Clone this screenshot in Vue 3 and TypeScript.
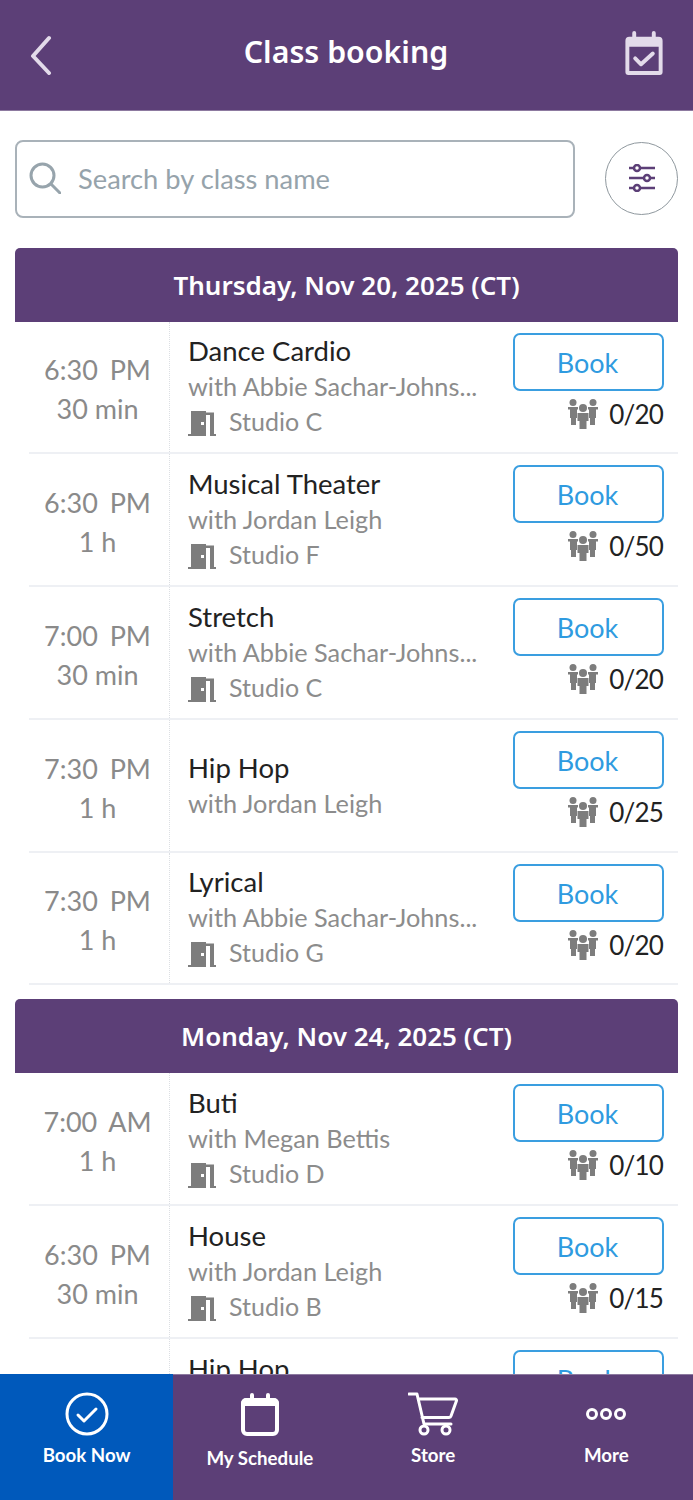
<script setup lang="ts">
interface Session {
  time: string
  duration: string
  name: string
  teacher: string
  studio?: string
  capacity: string
}
interface Day {
  date: string
  sessions: Session[]
}
const abbie = 'with Abbie Sachar-Johns...'
const jordan = 'with Jordan Leigh'
const days: Day[] = [
  {
    date: 'Thursday, Nov 20, 2025 (CT)',
    sessions: [
      { time: '6:30  PM', duration: '30 min', name: 'Dance Cardio', teacher: abbie, studio: 'Studio C', capacity: '0/20' },
      { time: '6:30  PM', duration: '1 h', name: 'Musical Theater', teacher: jordan, studio: 'Studio F', capacity: '0/50' },
      { time: '7:00  PM', duration: '30 min', name: 'Stretch', teacher: abbie, studio: 'Studio C', capacity: '0/20' },
      { time: '7:30  PM', duration: '1 h', name: 'Hip Hop', teacher: jordan, capacity: '0/25' },
      { time: '7:30  PM', duration: '1 h', name: 'Lyrical', teacher: abbie, studio: 'Studio G', capacity: '0/20' },
    ],
  },
  {
    date: 'Monday, Nov 24, 2025 (CT)',
    sessions: [
      { time: '7:00  AM', duration: '1 h', name: 'Buti', teacher: 'with Megan Bettis', studio: 'Studio D', capacity: '0/10' },
      { time: '6:30  PM', duration: '30 min', name: 'House', teacher: jordan, studio: 'Studio B', capacity: '0/15' },
      { time: '7:30  PM', duration: '1 h', name: 'Hip Hop', teacher: jordan, studio: 'Studio C', capacity: '0/25' },
    ],
  },
]
</script>

<template>
  <div class="page">
    <header class="topbar">
      <svg class="back" viewBox="0 0 24 40" aria-label="Back"><path d="M20 3 4 21l16 17" /></svg>
      <h1>Class booking</h1>
      <svg class="cal-check" viewBox="1 0 38 46" aria-label="Booked classes">
        <path fill-rule="evenodd" d="M10 0a2 2 0 0 1 2 2v4h16V2a2 2 0 0 1 4 0v4h3a4 4 0 0 1 4 4v32a3 3 0 0 1-3 3H4a3 3 0 0 1-3-3V10a4 4 0 0 1 4-4h3V2a2 2 0 0 1 2-2zM5 16v25h30V16z" />
        <path class="tick" d="M11 28l6 6 12-11" />
      </svg>
    </header>

    <div class="search-row">
      <div class="search">
        <svg viewBox="0 0 32 32" class="lens"><circle cx="13.5" cy="13.5" r="11.5" /><path d="M22 22l9 9" /></svg>
        <span>Search by class name</span>
      </div>
      <button class="filter" aria-label="Filter">
        <svg viewBox="0 0 28 28">
          <path d="M1 4h5M12 4h15M1 14h15M22 14h5M1 24h5M12 24h15" />
          <circle cx="9" cy="4" r="3" /><circle cx="19" cy="14" r="3" /><circle cx="9" cy="24" r="3" />
        </svg>
      </button>
    </div>

    <main class="list">
      <section v-for="day in days" :key="day.date" class="day">
        <h2>{{ day.date }}</h2>
        <article v-for="s in day.sessions" :key="s.time + s.name" class="row">
          <div class="when">
            <div class="time">{{ s.time }}</div>
            <div>{{ s.duration }}</div>
          </div>
          <div class="info">
            <div class="name">{{ s.name }}</div>
            <div class="teacher">{{ s.teacher }}</div>
            <div v-if="s.studio" class="studio">
              <svg viewBox="0 0 28 26" class="door">
                <path d="M0 26v-2h3V1h15v1.500h8V24h2v2h-6V5h-4v21zM13 12v3h3v-3z" fill-rule="evenodd" />
              </svg>
              <span>{{ s.studio }}</span>
            </div>
          </div>
          <div class="action">
            <button class="book">Book</button>
            <div class="count">
              <svg viewBox="0 0 30 30" class="people">
                <circle cx="5" cy="3.500" r="3.500" /><circle cx="25" cy="3.500" r="3.500" /><circle cx="15" cy="9" r="4" />
                <path d="M0 8h10v2.500H9v8.500H8v7H3v-7H2v-8.500H0zM20 8h10v2.500h-2v8.500h-1v7h-5v-7h-1v-8.500h-1z" />
                <path d="M9.500 14h11v8h-2v8h-7v-8h-2z" />
              </svg>
              <span>{{ s.capacity }}</span>
            </div>
          </div>
        </article>
      </section>
    </main>

    <nav class="tabs">
      <a class="tab active">
        <svg viewBox="0 0 44 44" class="ic-check"><circle cx="22" cy="22" r="20" /><path d="M13 23l6 6 12-12" /></svg>
        <span>Book Now</span>
      </a>
      <a class="tab tab-schedule">
        <svg viewBox="0 0 38 44" class="ic-cal">
          <path class="solid" d="M11 1a2 2 0 0 1 2 2v3h12V3a2 2 0 0 1 4 0v3h4a5 5 0 0 1 5 5v3H0v-3a5 5 0 0 1 5-5h4V3a2 2 0 0 1 2-2z" />
          <rect x="2" y="8" width="34" height="34" rx="4" />
        </svg>
        <span>My Schedule</span>
      </a>
      <a class="tab">
        <svg viewBox="0 0 50 44" class="ic-cart">
          <path d="M1 2h8l7 30h27M11 7h36a1.500 1.500 0 0 1 1.400 2L43 24a2 2 0 0 1-2 1.500H14" />
          <circle cx="16" cy="38" r="4" /><circle cx="38" cy="38" r="4" />
        </svg>
        <span>Store</span>
      </a>
      <a class="tab">
        <svg viewBox="0 0 40 44" class="ic-more"><circle cx="6" cy="22" r="4.500" /><circle cx="20" cy="22" r="4.500" /><circle cx="34" cy="22" r="4.500" /></svg>
        <span>More</span>
      </a>
    </nav>
  </div>
</template>

<style>
html, body { margin: 0; background: #fff; }
</style>

<style scoped>
.page {
  width: 693px;
  height: 1500px;
  display: flex;
  flex-direction: column;
  overflow: hidden;
  font-family: Lato, "Noto Sans", sans-serif;
  background: #fff;
}
.topbar {
  flex: none;
  height: 110px;
  background: #5c3f77;
  border-bottom: 1px solid #8d7aa0;
  box-sizing: content-box;
  display: grid;
  grid-template-columns: 1fr auto 1fr;
  align-items: center;
  padding: 0 29px 0 28px;
}
.topbar h1 {
  margin: 0 0 8px;
  color: #fff;
  font: 600 30.3px "Noto Sans", sans-serif;
}
.back { width: 26px; height: 40px; margin-top: 0; }
.back path { fill: none; stroke: #e3dbea; stroke-width: 4; stroke-linecap: round; stroke-linejoin: round; }
.cal-check { justify-self: end; width: 40px; height: 45px; margin-top: -4px; fill: #e3dbea; }
.cal-check .tick { fill: none; stroke: #e3dbea; stroke-width: 4; stroke-linecap: round; stroke-linejoin: round; }
.search-row {
  flex: none;
  display: flex;
  align-items: center;
  justify-content: space-between;
  padding: 29px 15px 30px 15px;
}
.search {
  box-sizing: border-box;
  width: 560px;
  height: 78px;
  border: 2px solid #a9b2b9;
  border-radius: 8px;
  display: flex;
  align-items: center;
  gap: 17px;
  padding: 0 0 2px 12px;
  color: #96a3ab;
  font-size: 27.3px;
}
.lens { width: 32px; height: 32px; fill: none; stroke: #97a4ac; stroke-width: 3; stroke-linecap: round; }
.filter {
  box-sizing: border-box;
  width: 73px;
  height: 73px;
  margin-bottom: 2px;
  border-radius: 50%;
  background: #fff;
  border: 1.500px solid #8f989e;
  padding: 0;
  display: flex;
  align-items: center;
  justify-content: center;
}
.filter svg { width: 28px; height: 28px; fill: #fff; stroke: #5c3f77; stroke-width: 2.500; }
.list { flex: 1; min-height: 0; overflow: hidden; padding: 0 15px; }
.day { margin-bottom: 14px; }
.day h2 {
  margin: 0;
  height: 74px;
  border-radius: 5px 5px 0 0;
  background: #5c3f77;
  color: #fff;
  text-align: center;
  font: 600 26px/74px "Noto Sans", sans-serif;
}
.row {
  box-sizing: border-box;
  height: 133px;
  margin-left: 14px;
  display: flex;
  border-bottom: 2px solid #eef0f4;
}
.day:first-child .row:nth-of-type(1),
.day:first-child .row:nth-of-type(5) { height: 132px; }
.when {
  box-sizing: border-box;
  flex: none;
  width: 141px;
  padding: 5px 3px 0 0;
  border-right: 1px dotted #dcdfe3;
  display: flex;
  flex-direction: column;
  justify-content: center;
  align-items: center;
  gap: 9px;
  color: #8a8a8a;
  font-size: 27px;
  line-height: 30px;
}
.time { white-space: pre; word-spacing: -1px; }
.info {
  flex: 1;
  min-width: 0;
  padding: 0 0 2px 18px;
  display: flex;
  flex-direction: column;
  justify-content: center;
}
.name { color: #222; font-size: 27.500px; line-height: 36px; }
.teacher { color: #8c8c8c; font-size: 25.300px; line-height: 34px; white-space: nowrap; }
.studio { display: flex; align-items: center; gap: 13px; color: #8c8c8c; font-size: 25px; line-height: 36px; }
.door { width: 28px; height: 26px; fill: #7d7d7d; margin-top: 4px; }
.action {
  flex: none;
  width: 151px;
  margin-right: 14px;
  padding-top: 11px;
  display: flex;
  flex-direction: column;
  align-items: flex-end;
}
.book {
  box-sizing: border-box;
  width: 151px;
  height: 58px;
  border: 2px solid #3a9ee0;
  border-radius: 7px;
  background: #fff;
  color: #2f9be0;
  font: 400 27px Lato, sans-serif;
  padding: 0 2px 0 0;
}
.count {
  display: flex;
  align-items: center;
  gap: 11px;
  margin-top: 4px;
  padding-right: 1px;
  color: #222;
  font-size: 26px;
  letter-spacing: -0.8px;
  line-height: 38px;
}
.people { width: 30px; height: 30px; fill: #7d7d7d; }
.tabs {
  flex: none;
  height: 126px;
  display: grid;
  grid-template-columns: repeat(4, 1fr);
  background: #5c3f77;
  border-top: 1px solid #8d7aa0;
  box-sizing: border-box;
  position: relative;
}
.tab {
  display: flex;
  flex-direction: column;
  align-items: center;
  color: #fff;
  font-size: 18.700px;
  font-weight: 700;
  padding-top: 17px;
}
.tab span { margin-top: 7px; line-height: 24px; }
.tab svg { height: 44px; }
.tab.active { background: #0059bb; margin-top: -1px; padding-top: 18px; }
.tab-schedule span { margin-top: 10px; }
.ic-check { width: 44px; fill: none; stroke: #fff; stroke-width: 3; stroke-linecap: round; stroke-linejoin: round; }
.ic-cal { width: 38px; fill: none; stroke: #fff; stroke-width: 4; }
.ic-cal .solid { fill: #fff; stroke: none; }
.ic-cart { width: 50px; fill: none; stroke: #fff; stroke-width: 3; stroke-linecap: round; stroke-linejoin: round; }
.ic-more { width: 40px; fill: none; stroke: #fff; stroke-width: 3; }
</style>
